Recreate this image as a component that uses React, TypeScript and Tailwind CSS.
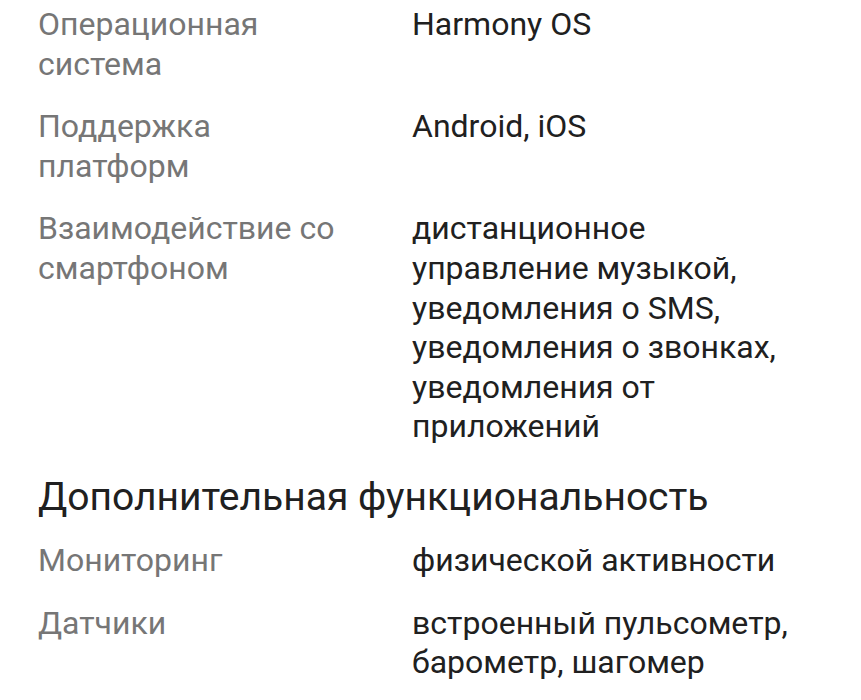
const rows1 = [
  { label: "Операционная система", value: "Harmony OS" },
  { label: "Поддержка платформ", value: "Android, iOS" },
  {
    label: "Взаимодействие со смартфоном",
    value:
      "дистанционное управление музыкой, уведомления о SMS, уведомления о звонках, уведомления от приложений",
  },
];

const rows2 = [
  { label: "Мониторинг", value: "физической активности" },
  { label: "Датчики", value: "встроенный пульсометр, барометр, шагомер" },
];

function Row({ label, value }: { label: string; value: string }) {
  return (
    <div className="grid grid-cols-[318px_1fr] gap-x-[56px]">
      <div className="text-[#767676]">{label}</div>
      <div className="text-[#202020]">{value}</div>
    </div>
  );
}

export default function App() {
  return (
    <div
      className="bg-white min-h-[700px] pl-[38px] pr-[38px] pt-[5px] text-[32px] leading-[39.6px]"
      style={{ fontFamily: "Roboto, 'Noto Sans', sans-serif" }}
    >
      <div className="flex flex-col gap-[23px]">
        {rows1.map((r) => (
          <Row key={r.label} {...r} />
        ))}
      </div>
      <h2 className="mt-[26px] mb-[20px] text-[39px] leading-[48px] text-[#202020]">
        Дополнительная функциональность
      </h2>
      <div className="flex flex-col gap-[23px]">
        {rows2.map((r) => (
          <Row key={r.label} {...r} />
        ))}
      </div>
    </div>
  );
}
